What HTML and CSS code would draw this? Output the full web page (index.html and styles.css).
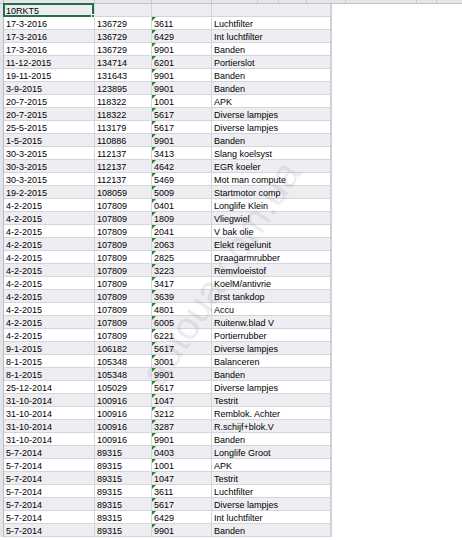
FILE: index.html
```html
<!DOCTYPE html>
<html>
<head>
<meta charset="utf-8">
<link rel="stylesheet" href="styles.css">
</head>
<body>
<div class="sheet">
  <div class="colhead">
    <div class="rh"></div>
    <div class="hc a"></div><div class="hc b"></div><div class="hc c"></div><div class="hc w46"></div><div class="hc w21"></div><div class="hc w28"></div><div class="hc w39"></div><div class="hc w71"></div><div class="hc w20"></div>
  </div>
  <div class="rows">
    <div class="row odd"><div class="rh"></div><div class="cell a sel">10RKT5<span class="selbox"><span class="handle"></span></span></div><div class="cell b"></div><div class="cell c nt"></div><div class="cell d"></div></div>
    <div class="row"><div class="rh"></div><div class="cell a">17-3-2016</div><div class="cell b">136729</div><div class="cell c">3611</div><div class="cell d">Luchtfilter</div></div>
    <div class="row odd"><div class="rh"></div><div class="cell a">17-3-2016</div><div class="cell b">136729</div><div class="cell c">6429</div><div class="cell d">Int luchtfilter</div></div>
    <div class="row"><div class="rh"></div><div class="cell a">17-3-2016</div><div class="cell b">136729</div><div class="cell c">9901</div><div class="cell d">Banden</div></div>
    <div class="row odd"><div class="rh"></div><div class="cell a">11-12-2015</div><div class="cell b">134714</div><div class="cell c">6201</div><div class="cell d">Portierslot</div></div>
    <div class="row"><div class="rh"></div><div class="cell a">19-11-2015</div><div class="cell b">131643</div><div class="cell c">9901</div><div class="cell d">Banden</div></div>
    <div class="row odd"><div class="rh"></div><div class="cell a">3-9-2015</div><div class="cell b">123895</div><div class="cell c">9901</div><div class="cell d">Banden</div></div>
    <div class="row"><div class="rh"></div><div class="cell a">20-7-2015</div><div class="cell b">118322</div><div class="cell c">1001</div><div class="cell d">APK</div></div>
    <div class="row odd"><div class="rh"></div><div class="cell a">20-7-2015</div><div class="cell b">118322</div><div class="cell c">5617</div><div class="cell d">Diverse lampjes</div></div>
    <div class="row"><div class="rh"></div><div class="cell a">25-5-2015</div><div class="cell b">113179</div><div class="cell c">5617</div><div class="cell d">Diverse lampjes</div></div>
    <div class="row odd"><div class="rh"></div><div class="cell a">1-5-2015</div><div class="cell b">110886</div><div class="cell c">9901</div><div class="cell d">Banden</div></div>
    <div class="row"><div class="rh"></div><div class="cell a">30-3-2015</div><div class="cell b">112137</div><div class="cell c">3413</div><div class="cell d">Slang koelsyst</div></div>
    <div class="row odd"><div class="rh"></div><div class="cell a">30-3-2015</div><div class="cell b">112137</div><div class="cell c">4642</div><div class="cell d">EGR koeler</div></div>
    <div class="row"><div class="rh"></div><div class="cell a">30-3-2015</div><div class="cell b">112137</div><div class="cell c">5469</div><div class="cell d">Mot man compute</div></div>
    <div class="row odd"><div class="rh"></div><div class="cell a">19-2-2015</div><div class="cell b">108059</div><div class="cell c">5009</div><div class="cell d">Startmotor comp</div></div>
    <div class="row"><div class="rh"></div><div class="cell a">4-2-2015</div><div class="cell b">107809</div><div class="cell c">0401</div><div class="cell d">Longlife Klein</div></div>
    <div class="row odd"><div class="rh"></div><div class="cell a">4-2-2015</div><div class="cell b">107809</div><div class="cell c">1809</div><div class="cell d">Vliegwiel</div></div>
    <div class="row"><div class="rh"></div><div class="cell a">4-2-2015</div><div class="cell b">107809</div><div class="cell c">2041</div><div class="cell d">V bak olie</div></div>
    <div class="row odd"><div class="rh"></div><div class="cell a">4-2-2015</div><div class="cell b">107809</div><div class="cell c">2063</div><div class="cell d">Elekt regelunit</div></div>
    <div class="row"><div class="rh"></div><div class="cell a">4-2-2015</div><div class="cell b">107809</div><div class="cell c">2825</div><div class="cell d">Draagarmrubber</div></div>
    <div class="row odd"><div class="rh"></div><div class="cell a">4-2-2015</div><div class="cell b">107809</div><div class="cell c">3223</div><div class="cell d">Remvloeistof</div></div>
    <div class="row"><div class="rh"></div><div class="cell a">4-2-2015</div><div class="cell b">107809</div><div class="cell c">3417</div><div class="cell d">KoelM/antivrie</div></div>
    <div class="row odd"><div class="rh"></div><div class="cell a">4-2-2015</div><div class="cell b">107809</div><div class="cell c">3639</div><div class="cell d">Brst tankdop</div></div>
    <div class="row"><div class="rh"></div><div class="cell a">4-2-2015</div><div class="cell b">107809</div><div class="cell c">4801</div><div class="cell d">Accu</div></div>
    <div class="row odd"><div class="rh"></div><div class="cell a">4-2-2015</div><div class="cell b">107809</div><div class="cell c">6005</div><div class="cell d">Ruitenw.blad V</div></div>
    <div class="row"><div class="rh"></div><div class="cell a">4-2-2015</div><div class="cell b">107809</div><div class="cell c">6221</div><div class="cell d">Portierrubber</div></div>
    <div class="row odd"><div class="rh"></div><div class="cell a">9-1-2015</div><div class="cell b">106182</div><div class="cell c">5617</div><div class="cell d">Diverse lampjes</div></div>
    <div class="row"><div class="rh"></div><div class="cell a">8-1-2015</div><div class="cell b">105348</div><div class="cell c">3001</div><div class="cell d">Balanceren</div></div>
    <div class="row odd"><div class="rh"></div><div class="cell a">8-1-2015</div><div class="cell b">105348</div><div class="cell c">9901</div><div class="cell d">Banden</div></div>
    <div class="row"><div class="rh"></div><div class="cell a">25-12-2014</div><div class="cell b">105029</div><div class="cell c">5617</div><div class="cell d">Diverse lampjes</div></div>
    <div class="row odd"><div class="rh"></div><div class="cell a">31-10-2014</div><div class="cell b">100916</div><div class="cell c">1047</div><div class="cell d">Testrit</div></div>
    <div class="row"><div class="rh"></div><div class="cell a">31-10-2014</div><div class="cell b">100916</div><div class="cell c">3212</div><div class="cell d">Remblok. Achter</div></div>
    <div class="row odd"><div class="rh"></div><div class="cell a">31-10-2014</div><div class="cell b">100916</div><div class="cell c">3287</div><div class="cell d">R.schijf+blok.V</div></div>
    <div class="row"><div class="rh"></div><div class="cell a">31-10-2014</div><div class="cell b">100916</div><div class="cell c">9901</div><div class="cell d">Banden</div></div>
    <div class="row odd"><div class="rh"></div><div class="cell a">5-7-2014</div><div class="cell b">89315</div><div class="cell c">0403</div><div class="cell d">Longlife Groot</div></div>
    <div class="row"><div class="rh"></div><div class="cell a">5-7-2014</div><div class="cell b">89315</div><div class="cell c">1001</div><div class="cell d">APK</div></div>
    <div class="row odd"><div class="rh"></div><div class="cell a">5-7-2014</div><div class="cell b">89315</div><div class="cell c">1047</div><div class="cell d">Testrit</div></div>
    <div class="row"><div class="rh"></div><div class="cell a">5-7-2014</div><div class="cell b">89315</div><div class="cell c">3611</div><div class="cell d">Luchtfilter</div></div>
    <div class="row odd"><div class="rh"></div><div class="cell a">5-7-2014</div><div class="cell b">89315</div><div class="cell c">5617</div><div class="cell d">Diverse lampjes</div></div>
    <div class="row"><div class="rh"></div><div class="cell a">5-7-2014</div><div class="cell b">89315</div><div class="cell c">6429</div><div class="cell d">Int luchtfilter</div></div>
    <div class="row odd"><div class="rh"></div><div class="cell a">5-7-2014</div><div class="cell b">89315</div><div class="cell c">9901</div><div class="cell d">Banden</div></div>
  </div>
  <div class="watermark">autoua.com.ua</div>
</div>
</body>
</html>
```
FILE: styles.css
```css
html, body {
  margin: 0;
  padding: 0;
  background: #ffffff;
}
body {
  font-family: "Liberation Sans", Arial, sans-serif;
  font-size: 9px;
  color: #000000;
}
.sheet {
  position: relative;
  width: 462px;
  height: 540px;
  overflow: hidden;
}
.colhead {
  display: flex;
  height: 4px;
  box-sizing: border-box;
  background: #e6e6e6;
  border-bottom: 1px solid #c4c4c4;
}
.colhead .hc {
  box-sizing: border-box;
  border-right: 1px solid #c8c8c8;
}
.hc.a { width: 91px; }
.hc.b { width: 57px; }
.hc.c { width: 60px; }
.hc.w46 { width: 46px; }
.hc.w21 { width: 21px; }
.hc.w28 { width: 28px; }
.hc.w39 { width: 39px; }
.hc.w71 { width: 71px; }
.hc.w20 { width: 20px; }
.rh {
  width: 4px;
  flex: none;
  box-sizing: border-box;
  background: #e2e5ea;
  border-right: 1px solid #b9bcc4;
}
.rows {
  display: flex;
  flex-direction: column;
}
.row {
  display: flex;
  height: 13px;
}
.cell {
  position: relative;
  box-sizing: border-box;
  height: 13px;
  border-right: 1px solid #d4d4dc;
  border-bottom: 1px solid #d4d4dc;
  padding-left: 2px;
  line-height: 14px;
  white-space: nowrap;
  overflow: hidden;
  flex: none;
}
.row.odd .cell { background: #ededf2; }
.cell.a { width: 91px; }
.cell.b { width: 57px; }
.cell.c { width: 60px; }
.cell.d { width: 120px; border-right: 2px solid #d0d0d8; }
.cell.c::before {
  content: "";
  position: absolute;
  left: 0;
  top: 0;
  width: 0;
  height: 0;
  border-top: 4px solid #1c8c24;
  border-right: 4px solid transparent;
}
.cell.c.nt::before { display: none; }
.cell.sel { overflow: visible; }
.selbox {
  position: absolute;
  left: -1px;
  top: -1px;
  right: 0;
  bottom: -1px;
  border: 2px solid #217346;
  z-index: 2;
}
.handle {
  position: absolute;
  right: -3px;
  bottom: -3px;
  width: 4px;
  height: 4px;
  background: #217346;
  border: 1px solid #ffffff;
  box-sizing: border-box;
}
.watermark {
  position: absolute;
  left: 150px;
  top: 362px;
  font-family: "Liberation Sans", Arial, sans-serif;
  font-size: 39px;
  line-height: 39px;
  color: rgba(110, 110, 110, 0.14);
  transform: rotate(-57deg);
  transform-origin: left center;
  white-space: nowrap;
  pointer-events: none;
}
```
